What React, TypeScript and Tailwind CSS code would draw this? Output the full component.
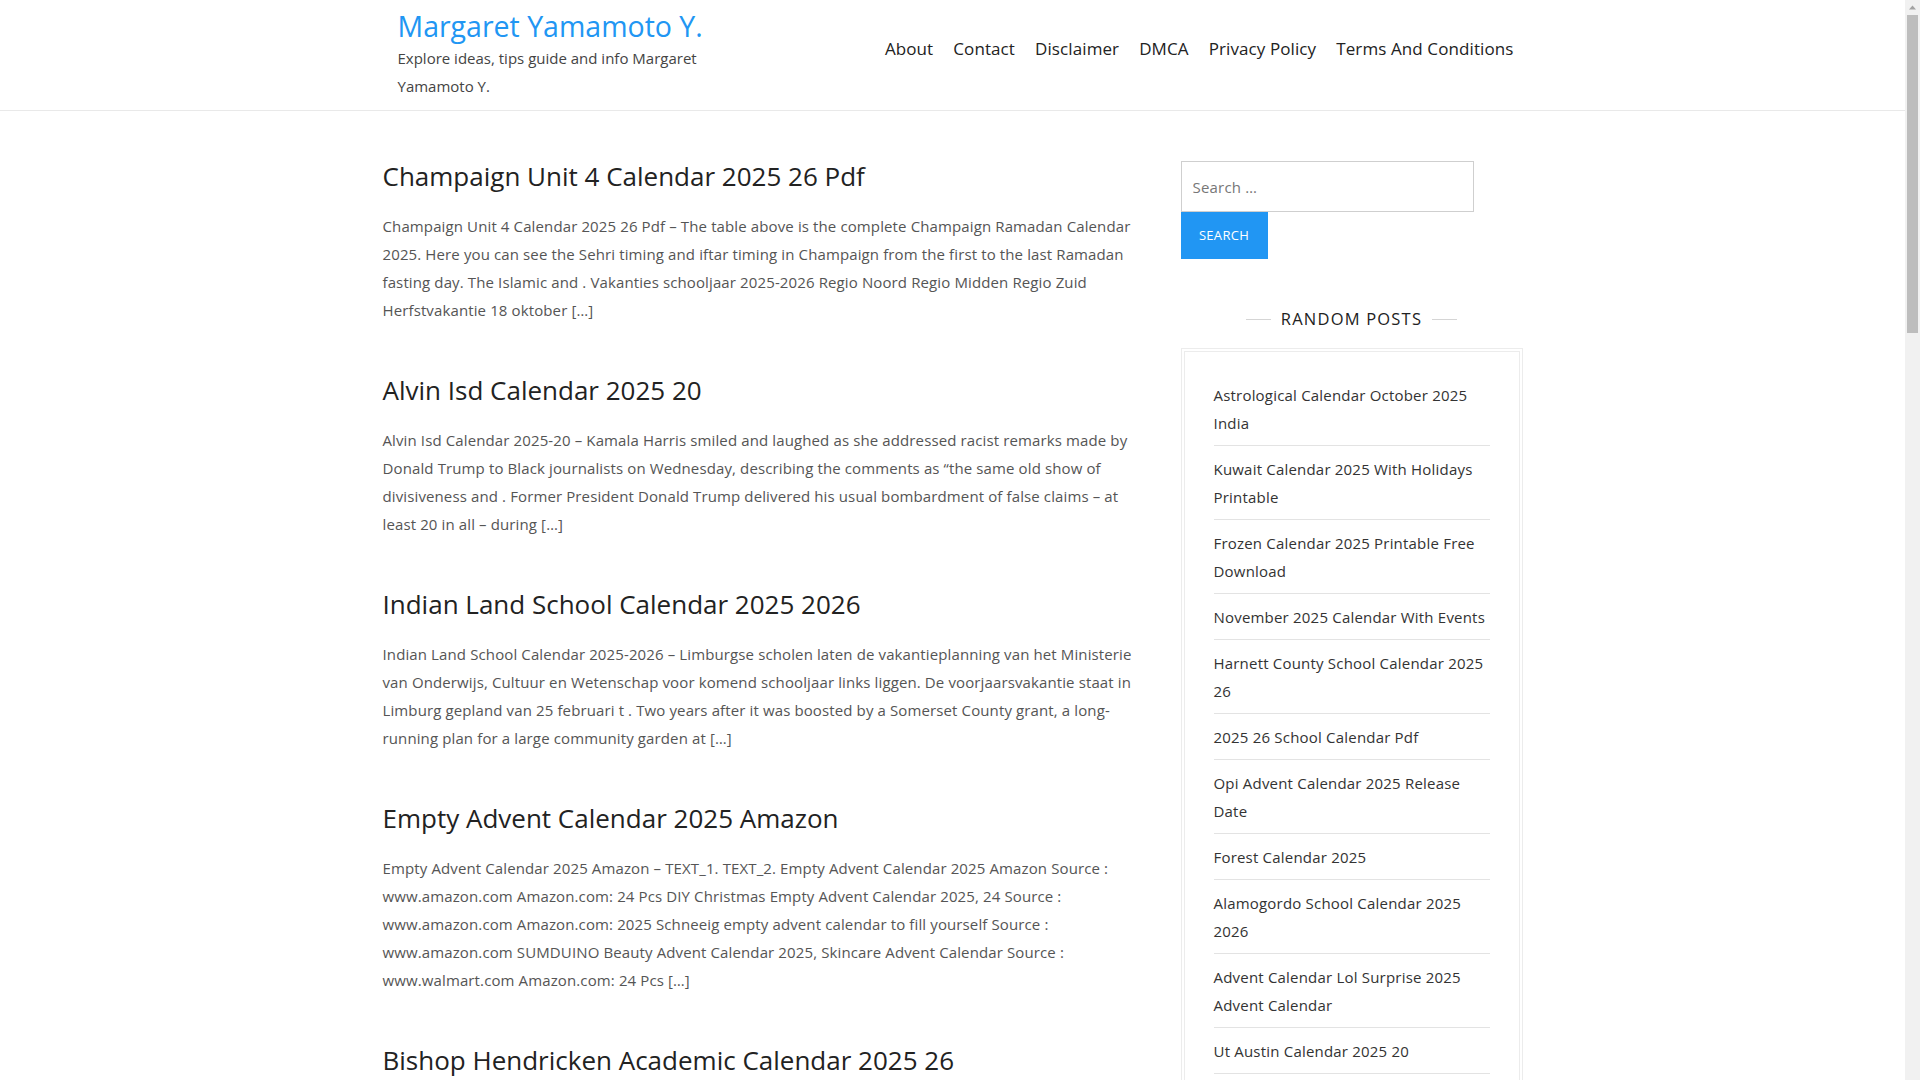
import React from "react";

const navLinks = ["About", "Contact", "Disclaimer", "DMCA", "Privacy Policy", "Terms And Conditions"];

const posts = [
  {
    title: "Champaign Unit 4 Calendar 2025 26 Pdf",
    excerpt:
      "Champaign Unit 4 Calendar 2025 26 Pdf – The table above is the complete Champaign Ramadan Calendar 2025. Here you can see the Sehri timing and iftar timing in Champaign from the first to the last Ramadan fasting day. The Islamic and . Vakanties schooljaar 2025-2026 Regio Noord Regio Midden Regio Zuid Herfstvakantie 18 oktober […]",
  },
  {
    title: "Alvin Isd Calendar 2025 20",
    excerpt:
      "Alvin Isd Calendar 2025-20 – Kamala Harris smiled and laughed as she addressed racist remarks made by Donald Trump to Black journalists on Wednesday, describing the comments as “the same old show of divisiveness and . Former President Donald Trump delivered his usual bombardment of false claims – at least 20 in all – during […]",
  },
  {
    title: "Indian Land School Calendar 2025 2026",
    excerpt:
      "Indian Land School Calendar 2025-2026 – Limburgse scholen laten de vakantieplanning van het Ministerie van Onderwijs, Cultuur en Wetenschap voor komend schooljaar links liggen. De voorjaarsvakantie staat in Limburg gepland van 25 februari t . Two years after it was boosted by a Somerset County grant, a long-running plan for a large community garden at […]",
  },
  {
    title: "Empty Advent Calendar 2025 Amazon",
    excerpt:
      "Empty Advent Calendar 2025 Amazon – TEXT_1. TEXT_2. Empty Advent Calendar 2025 Amazon Source : www.amazon.com Amazon.com: 24 Pcs DIY Christmas Empty Advent Calendar 2025, 24 Source : www.amazon.com Amazon.com: 2025 Schneeig empty advent calendar to fill yourself Source : www.amazon.com SUMDUINO Beauty Advent Calendar 2025, Skincare Advent Calendar Source : www.walmart.com Amazon.com: 24 Pcs […]",
  },
  {
    title: "Bishop Hendricken Academic Calendar 2025 26",
    excerpt:
      "Bishop Hendricken Academic Calendar 2025 26 – Here you can find the complete academic calendar for the 2025-2026 school year, including holidays, breaks and important dates for students and families […]",
  },
];

const randomPosts = [
  "Astrological Calendar October 2025 India",
  "Kuwait Calendar 2025 With Holidays Printable",
  "Frozen Calendar 2025 Printable Free Download",
  "November 2025 Calendar With Events",
  "Harnett County School Calendar 2025 26",
  "2025 26 School Calendar Pdf",
  "Opi Advent Calendar 2025 Release Date",
  "Forest Calendar 2025",
  "Alamogordo School Calendar 2025 2026",
  "Advent Calendar Lol Surprise 2025 Advent Calendar",
  "Ut Austin Calendar 2025 20",
];

function Scrollbar() {
  return (
    <div className="fixed top-0 right-0 z-10 flex h-screen w-[15px] flex-col items-center bg-[#f1f1f1]">
      <svg width="15" height="15" viewBox="0 0 15 15" className="shrink-0">
        <path d="M4 9.5 L7.5 5.5 L11 9.5 Z" fill="#a3a3a3" />
      </svg>
      <div className="h-[318px] w-[11px] bg-[#bdbdbd]" />
    </div>
  );
}

export default function App() {
  return (
    <div className="min-h-[3600px] bg-white font-['Open_Sans',sans-serif] text-[#333]">
      <div className="mr-[15px]">
        {/* Header */}
        <header className="border-b border-[#e9e9e9]">
          <div className="mx-auto flex h-[110px] w-[1140px] items-start justify-between pl-[15px] pr-[9px]">
            <div className="w-[340px] pt-[8px]">
              <a className="block text-[28.5px] font-medium leading-[36px] text-[#2196f3]">Margaret Yamamoto Y.</a>
              <p className="w-[310px] text-[15px] leading-[28px] text-[#444]">
                Explore ideas, tips guide and info Margaret Yamamoto Y.
              </p>
            </div>
            <nav className="flex items-center gap-[20px] pt-[36px]">
              {navLinks.map((l) => (
                <a key={l} className="text-[17px] font-medium leading-[26px] tracking-[0.1px] text-[#222]">
                  {l}
                </a>
              ))}
            </nav>
          </div>
        </header>

        {/* Body */}
        <div className="mx-auto flex w-[1140px] justify-between pt-[48px]">
          <main className="w-[750px]">
            {posts.map((p) => (
              <article key={p.title} className="mb-[49px]">
                <h2 className="mb-[19px] text-[26px] font-medium leading-[34px] text-[#222]">{p.title}</h2>
                <p className="text-[15px] leading-[28px] tracking-[0.12px] text-[#555]">{p.excerpt}</p>
              </article>
            ))}
          </main>

          <aside className="w-[342px] pt-[2px]">
            <form className="flex flex-col items-start">
              <input
                placeholder="Search …"
                className="h-[51px] w-[293px] border border-[#cfcfcf] px-[11px] text-[15px] tracking-[0.2px] text-[#555] outline-none placeholder:text-[#777]"
              />
              <button
                type="button"
                className="h-[47px] w-[87px] bg-[#2196f3] text-[13px] font-medium uppercase tracking-[0.3px] text-white"
              >
                Search
              </button>
            </form>

            <div className="mt-[48px] mb-[17px] flex items-center justify-center gap-[10px]">
              <span className="h-px w-[25px] bg-[#d5d5d5]" />
              <h3 className="text-[16.5px] font-medium uppercase leading-[24px] tracking-[1.2px] text-[#222]">
                Random Posts
              </h3>
              <span className="h-px w-[25px] bg-[#d5d5d5]" />
            </div>

            <div className="border border-[#ececec] p-[2px]">
              <ul className="border border-[#ececec] px-[29px] pt-[20px] pb-[20px]">
                {randomPosts.map((r) => (
                  <li
                    key={r}
                    className="border-b border-[#e3e3e3] py-[8.5px] text-[15px] leading-[28px] tracking-[0.2px] text-[#333]"
                  >
                    <a>{r}</a>
                  </li>
                ))}
              </ul>
            </div>
          </aside>
        </div>
      </div>
      <Scrollbar />
    </div>
  );
}
